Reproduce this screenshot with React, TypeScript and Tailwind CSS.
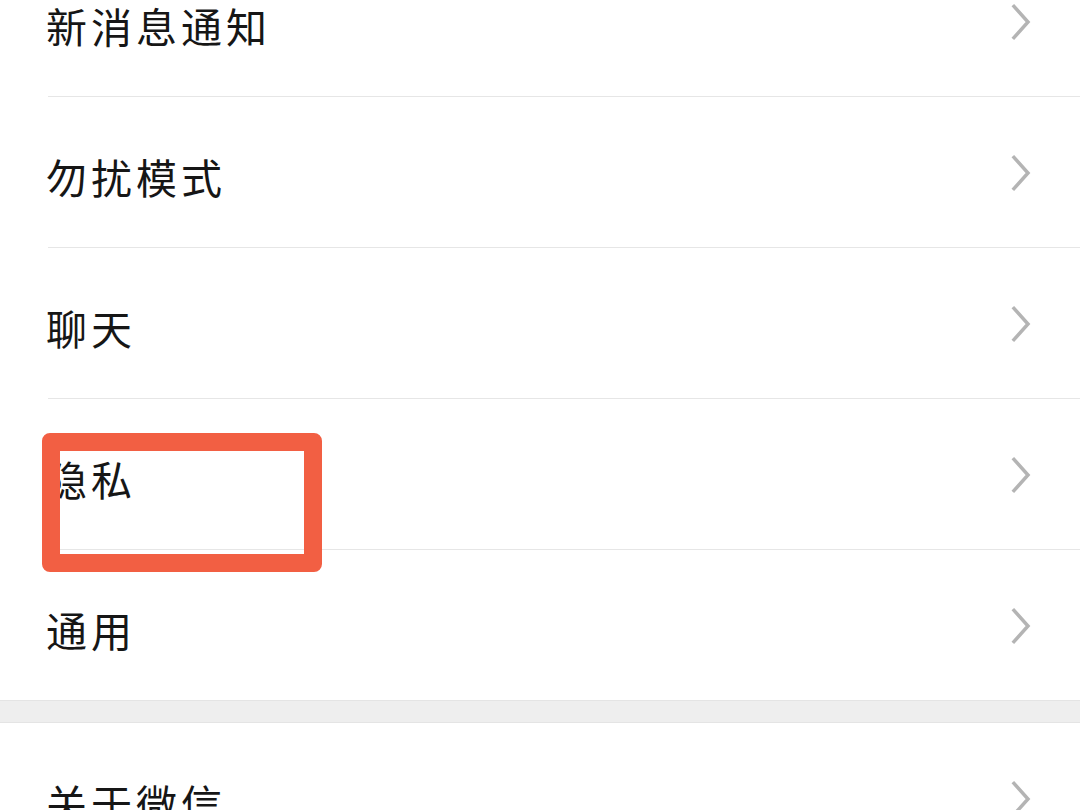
const rows = ['新消息通知', '勿扰模式', '聊天', '隐私', '通用'];

function Chevron() {
  return (
    <svg width="20" height="36" viewBox="0 0 20 36" fill="none" className="shrink-0">
      <path d="M3 2.5 L17 18 L3 33.5" stroke="#b4b4b4" strokeWidth="3.5" strokeLinecap="square" strokeLinejoin="miter" />
    </svg>
  );
}

function Row({ label, last }: { label: string; last?: boolean }) {
  return (
    <div className="pl-[46px] bg-white">
      <div className="flex h-[150px] items-center pr-[49px]">
        <span className="flex-1 pt-[9px] text-[41px] leading-none tracking-[4px] text-[#161616]">{label}</span>
        <div className="pt-[1px]">
          <Chevron />
        </div>
      </div>
      {!last && <div className="ml-[2px] h-px bg-[#e6e6e6]" />}
    </div>
  );
}

export default function App() {
  return (
    <div
      className="relative h-[810px] w-[1080px] overflow-hidden bg-white"
      style={{ fontFamily: '"Noto Sans CJK SC", "Noto Sans", sans-serif' }}
    >
      <div className="-mt-[54px] flex flex-col">
        {rows.map((r, i) => (
          <Row key={r} label={r} last={i === rows.length - 1} />
        ))}
        <div className="h-[23px] border-y border-[#e4e4e4] bg-[#eeeeee]" />
        <Row label="关于微信" />
      </div>

      <div className="absolute left-[42px] top-[433px] h-[139px] w-[280px] rounded-[8px] border-[18px] border-[#f25f43]" />
    </div>
  );
}
